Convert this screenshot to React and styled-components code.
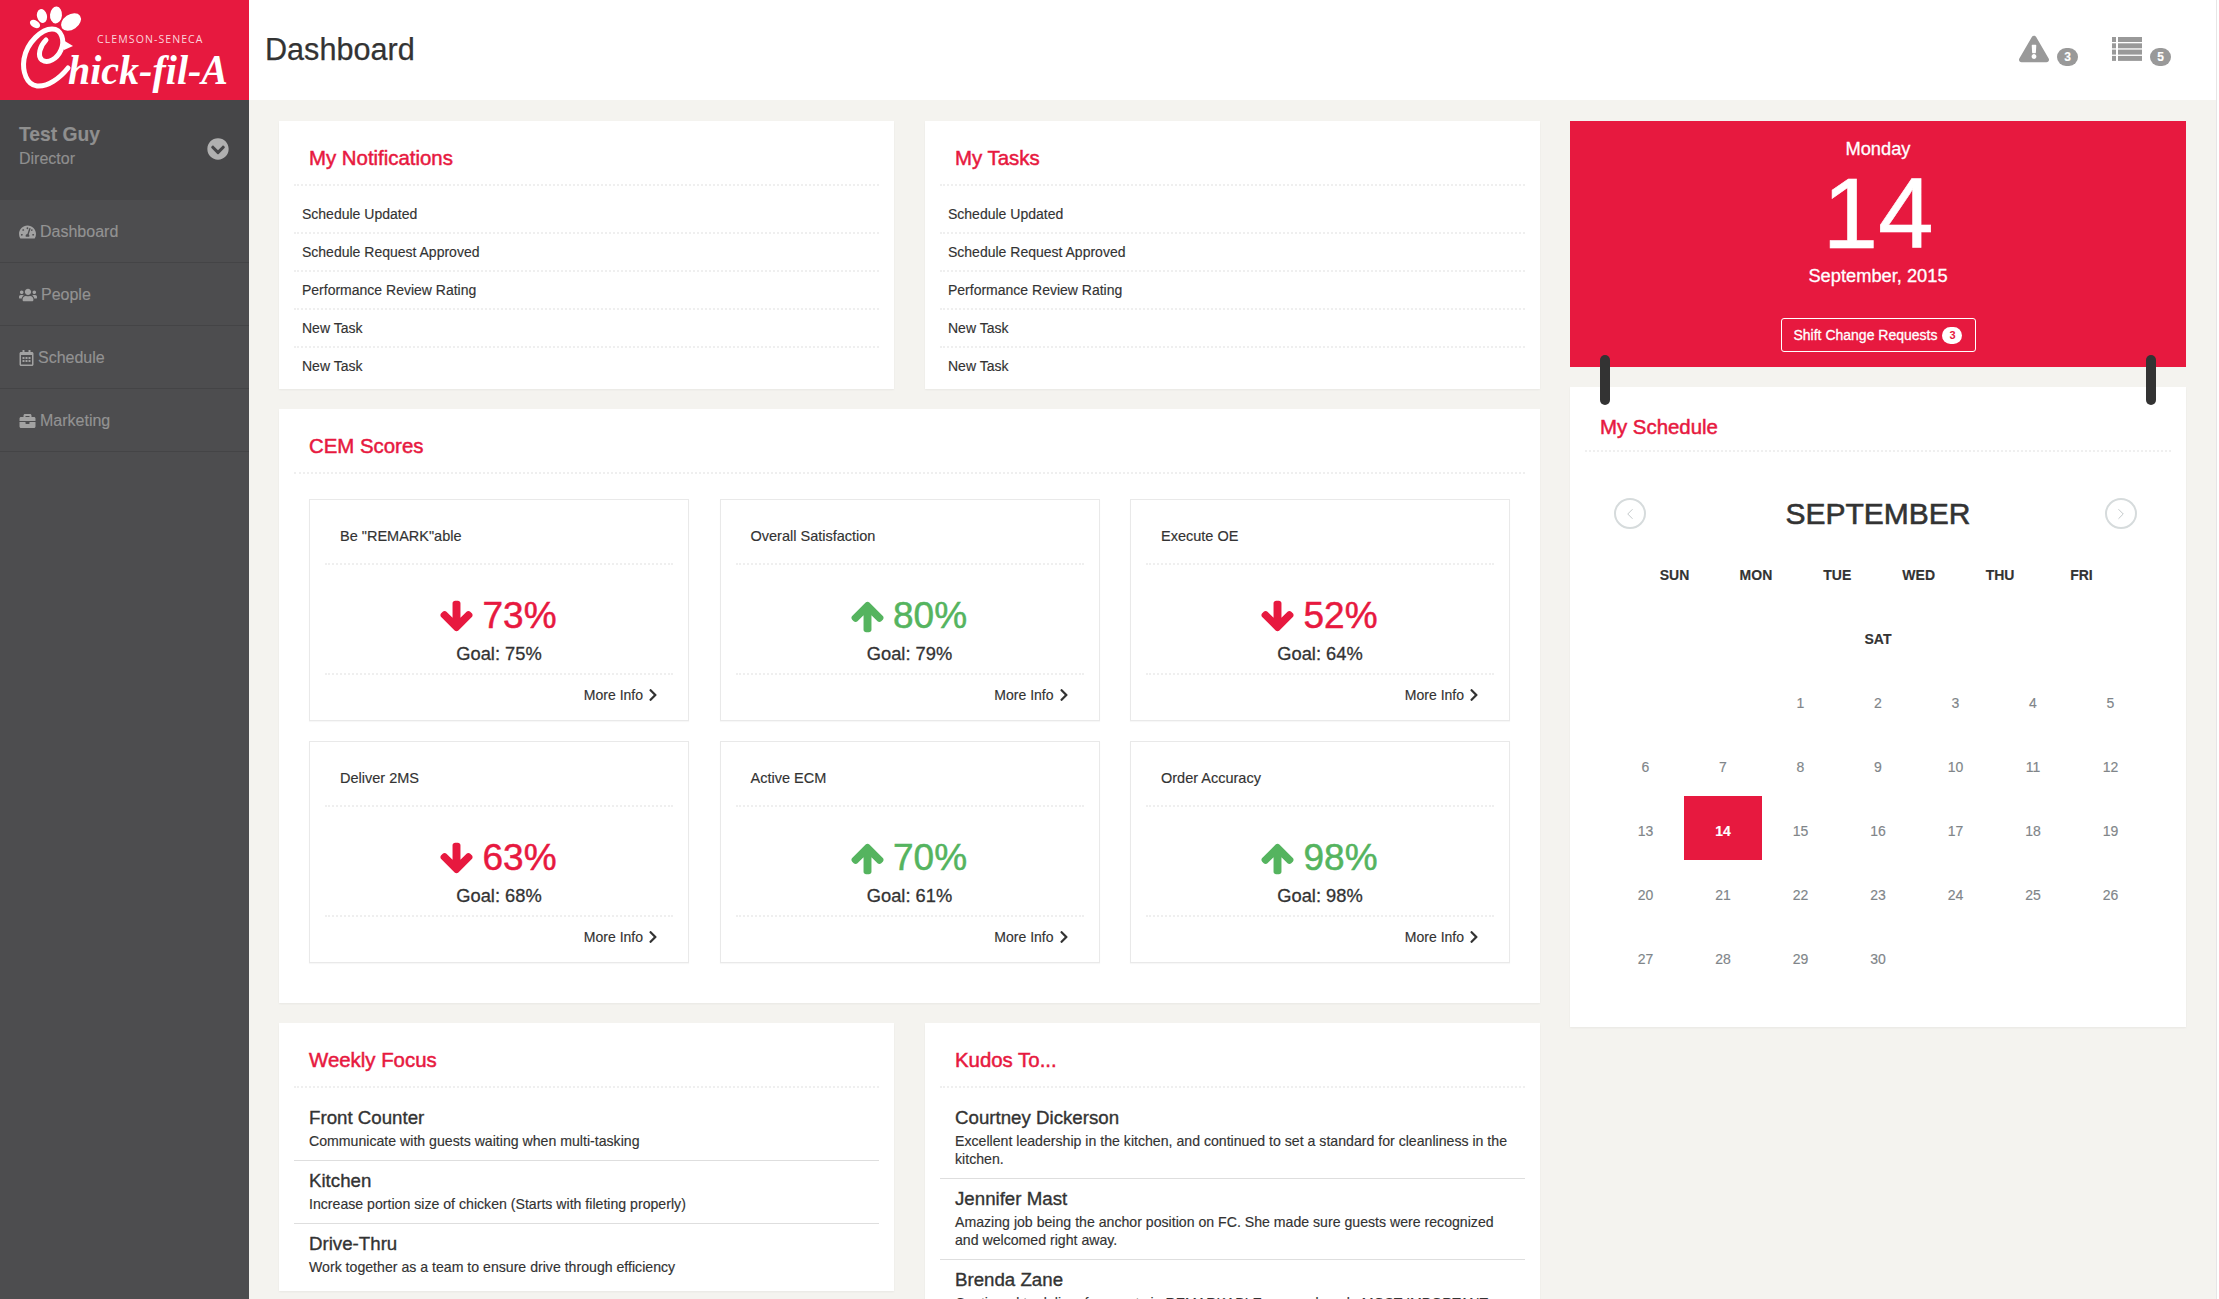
import styled, { createGlobalStyle } from "styled-components";
import {
  FaTachometerAlt,
  FaUsers,
  FaRegCalendarAlt,
  FaBriefcase,
  FaExclamationTriangle,
  FaChevronRight,
  FaChevronCircleDown,
} from "react-icons/fa";
import { ChevronLeft, ChevronRight } from "lucide-react";

const RED = "#e7193f";
const GREEN = "#55b45f";
const DOTS = "2px dotted #efefef";

const GlobalStyle = createGlobalStyle`
  * { box-sizing: border-box; }
  html, body { margin: 0; height: 100%; }
  body {
    font-family: "Liberation Sans", Arial, sans-serif;
    font-size: 14px;
    color: #333;
    background: #f4f3ef;
    -webkit-text-stroke: 0.15px currentColor;
  }
`;

const Page = styled.div`
  display: flex;
  height: 100vh;
  overflow: hidden;
  background: #fff;
`;

const Sidebar = styled.aside`
  flex: 0 0 249px;
  background: #4d4d4f;
`;

const LogoBox = styled.div`
  height: 100px;
  background: ${RED};
`;

const LogoText = styled.text`
  font-family: "Liberation Serif", serif;
  font-style: italic;
  font-weight: 700;
  fill: #fff;
`;

const LogoCaption = styled.text`
  font-family: "Open Sans", sans-serif;
  font-size: 10.5px;
  letter-spacing: 1.1px;
  fill: #fbd5dc;
  -webkit-text-stroke: 0;
`;

const UserBox = styled.div`
  height: 100px;
  background: #464648;
  display: flex;
  justify-content: space-between;
  align-items: center;
  padding: 0 20px 2px 19px;
  color: #8f8f8f;
`;

const UserInfo = styled.div`
  align-self: flex-start;
  padding-top: 23px;
`;

const UserName = styled.div`
  font-size: 19.3px;
  font-weight: 700;
  line-height: 24px;
`;

const UserRole = styled.div`
  font-size: 16px;
  line-height: 24px;
`;

const UserToggle = styled(FaChevronCircleDown)`
  width: 22px;
  height: 22px;
  color: #b0b0b0;
`;

const NavItem = styled.div`
  height: 63px;
  display: flex;
  align-items: center;
  gap: 4px;
  padding: 2px 0 0 19px;
  border-bottom: 1px solid #444446;
  font-size: 16px;
  color: #939393;

  svg {
    width: ${(p) => p.$iconWidth}px;
    height: 16px;
    color: #a2a2a2;
  }
`;

const Main = styled.main`
  flex: 1;
  min-width: 0;
  border-right: 1px solid #e6e6e6;
  margin-right: 2px;
  background: #f4f3ef;
`;

const TopBar = styled.header`
  height: 100px;
  background: #fff;
  display: flex;
  justify-content: space-between;
  padding: 0 45px 0 16px;
`;

const PageTitle = styled.h1`
  margin: 0;
  font-size: 30.6px;
  font-weight: 400;
  line-height: 98px;
  color: #333;
  -webkit-text-stroke: 0.25px #333;
`;

const Alerts = styled.div`
  display: flex;
  align-items: flex-start;
  padding-top: 35px;
`;

const AlertIcon = styled(FaExclamationTriangle)`
  width: 30px;
  height: 28px;
  color: #999;
`;

const ListIcon = styled.svg`
  width: 30px;
  height: 24px;
  margin-top: 2px;
  fill: #999;
`;

const CountBadge = styled.span`
  width: 21px;
  height: 18px;
  margin: 13px ${(p) => p.$gap || 0}px 0 8px;
  border-radius: 9px;
  background: #999;
  color: #fff;
  font-size: 12px;
  font-weight: 700;
  line-height: 18px;
  text-align: center;
`;

const Content = styled.div`
  display: grid;
  grid-template-columns: 1261px 616px;
  justify-content: space-between;
  padding: 21px 30px 0;
`;

const Column = styled.div`
  display: flex;
  flex-direction: column;
  gap: 20px;
`;

const TwoUp = styled.div`
  display: grid;
  grid-template-columns: 615px 615px;
  justify-content: space-between;
  align-items: start;
`;

const Card = styled.section`
  background: #fff;
  box-shadow: 0 1px 2px rgba(0, 0, 0, 0.05);
`;

const CardTitle = styled.h2`
  height: 65px;
  margin: 0 15px;
  padding: ${(p) => (p.$low ? 29 : 26)}px 0 0 15px;
  border-bottom: ${DOTS};
  font-size: 20.4px;
  font-weight: 400;
  line-height: 22px;
  color: ${RED};
  -webkit-text-stroke: 0.5px ${RED};
`;

const SimpleList = styled.ul`
  list-style: none;
  margin: 0;
  padding: 10px 15px 3px;
`;

const SimpleRow = styled.li`
  height: 38px;
  padding-left: 8px;
  line-height: 36px;
  font-size: 14px;

  &:not(:last-child) {
    border-bottom: ${DOTS};
  }
`;

const ScoreGrid = styled.div`
  display: grid;
  grid-template-columns: repeat(3, 380px);
  grid-auto-rows: 222px;
  column-gap: 30.5px;
  row-gap: 20px;
  padding: 25px 0 40px 30px;
`;

const ScoreCard = styled.article`
  border: 1px solid #e9e9e9;
  box-shadow: 0 1px 1px rgba(0, 0, 0, 0.03);
  text-align: center;
`;

const ScoreName = styled.div`
  height: 65px;
  margin: 0 15px;
  padding: 26px 0 0 15px;
  border-bottom: ${DOTS};
  font-size: 14.5px;
  line-height: 20px;
  text-align: left;
`;

const ScoreValue = styled.div`
  display: flex;
  justify-content: center;
  align-items: center;
  gap: 7px;
  height: 44px;
  margin-top: 29px;
  padding-right: 3px;
  font-size: 37px;
  color: ${(p) => (p.$up ? GREEN : RED)};
  -webkit-text-stroke: 0.5px ${(p) => (p.$up ? GREEN : RED)};
`;

const Arrow = styled.svg`
  width: 37px;
  height: 37px;
  fill: currentColor;
  stroke: none;
  transform: ${(p) => (p.$up ? "scaleY(-1)" : "none")};
`;

const ScoreGoal = styled.div`
  margin-top: 4px;
  font-size: 18.3px;
  line-height: 24px;
  -webkit-text-stroke: 0.3px #333;
`;

const ScoreFooter = styled.div`
  display: flex;
  justify-content: flex-end;
  align-items: center;
  gap: 4px;
  height: 42px;
  margin: 7px 15px 0;
  padding-right: 14px;
  border-top: ${DOTS};
  font-size: 14px;

  svg {
    width: 12px;
    height: 14px;
  }
`;

const NoteList = styled.div`
  padding: 10px 0 5px;
`;

const Note = styled.div`
  margin: 0 15px;
  padding: 8px 15px 10px;

  &:not(:last-child) {
    border-bottom: 1px solid #dedede;
  }
`;

const NoteTitle = styled.div`
  font-size: 18.7px;
  line-height: 24px;
  -webkit-text-stroke: 0.35px #333;
`;

const NoteText = styled.div`
  margin-top: 2px;
  font-size: 14.13px;
  line-height: 18px;
`;

const CalendarWrap = styled.div`
  position: relative;
  display: flex;
  flex-direction: column;
  gap: 20px;
`;

const Ring = styled.span`
  position: absolute;
  top: 234px;
  ${(p) => (p.$right ? "right: 30px;" : "left: 30px;")}
  width: 10px;
  height: 50px;
  border-radius: 5px;
  background: #333;
`;

const DateHero = styled.div`
  height: 246px;
  padding-top: 17px;
  background: ${RED};
  color: #fff;
  display: flex;
  flex-direction: column;
  align-items: center;
`;

const HeroLine = styled.div`
  font-size: 18.3px;
  line-height: 22px;
  -webkit-text-stroke: 0.3px #fff;
`;

const HeroDay = styled.div`
  margin: 3px 0 2px;
  font-size: 100px;
  line-height: 100px;
  -webkit-text-stroke: 0.6px #fff;
`;

const ShiftButton = styled.button`
  display: flex;
  align-items: center;
  gap: 5px;
  width: 195px;
  height: 34px;
  margin-top: 31px;
  padding: 0 12px;
  border: 1px solid #fff;
  border-radius: 3px;
  background: transparent;
  color: #fff;
  font: inherit;
  font-size: 14px;
  white-space: nowrap;
  -webkit-text-stroke: 0.3px #fff;
`;

const ShiftCount = styled.span`
  flex: none;
  width: 20px;
  height: 17px;
  border-radius: 9px;
  background: #fff;
  color: ${RED};
  font-size: 11px;
  font-weight: 700;
  line-height: 17px;
  text-align: center;
  -webkit-text-stroke: 0;
`;

const ScheduleCard = styled(Card)`
  height: 640px;
`;

const MonthBar = styled.div`
  display: grid;
  grid-template-columns: 1fr auto 1fr;
  align-items: center;
  margin-top: 46px;
`;

const MonthName = styled.div`
  font-size: 30px;
  line-height: 31px;
  -webkit-text-stroke: 0.6px #333;
`;

const MonthButton = styled.span`
  display: flex;
  align-items: center;
  justify-content: center;
  width: 32px;
  height: 31px;
  border: 2px solid #d6dbdc;
  border-radius: 50%;
  color: #bcc3c4;
  justify-self: ${(p) => (p.$next ? "end" : "start")};
  margin: ${(p) => (p.$next ? "0 49px 0 0" : "0 0 0 44px")};
`;

const Weekdays = styled.div`
  display: flex;
  flex-wrap: wrap;
  justify-content: center;
  width: 500px;
  margin: 14px auto 0;
`;

const Weekday = styled.div`
  width: 81.4px;
  height: 64px;
  font-size: 14px;
  font-weight: 700;
  line-height: 64px;
  text-align: center;
`;

const DayGrid = styled.div`
  display: grid;
  grid-template-columns: repeat(7, 77.5px);
  grid-auto-rows: 64px;
  justify-content: center;
  margin-top: -3px;
`;

const Day = styled.div`
  padding-top: 6px;
  font-size: 14px;
  line-height: 58px;
  text-align: center;
  color: ${(p) => (p.$today ? "#fff" : "#808589")};
  background: ${(p) => (p.$today ? RED : "transparent")};
  font-weight: ${(p) => (p.$today ? 700 : 400)};
`;

const notifications = [
  "Schedule Updated",
  "Schedule Request Approved",
  "Performance Review Rating",
  "New Task",
  "New Task",
];

const scores = [
  { name: 'Be "REMARK"able', value: 73, goal: 75 },
  { name: "Overall Satisfaction", value: 80, goal: 79, up: true },
  { name: "Execute OE", value: 52, goal: 64 },
  { name: "Deliver 2MS", value: 63, goal: 68 },
  { name: "Active ECM", value: 70, goal: 61, up: true },
  { name: "Order Accuracy", value: 98, goal: 98, up: true },
];

const focus = [
  ["Front Counter", "Communicate with guests waiting when multi-tasking"],
  ["Kitchen", "Increase portion size of chicken (Starts with fileting properly)"],
  ["Drive-Thru", "Work together as a team to ensure drive through efficiency"],
];

const kudos = [
  [
    "Courtney Dickerson",
    "Excellent leadership in the kitchen, and continued to set a standard for cleanliness in the kitchen.",
  ],
  [
    "Jennifer Mast",
    "Amazing job being the anchor position on FC. She made sure guests were recognized and welcomed right away.",
  ],
  [
    "Brenda Zane",
    "Continued to deliver for guests in REMARKABLE way and made MOST IMPORTANT",
  ],
];

const weekdays = ["SUN", "MON", "TUE", "WED", "THU", "FRI", "SAT"];
const days = [null, null, ...Array.from({ length: 30 }, (_, i) => i + 1)];

function Logo() {
  return (
    <svg width="249" height="100" viewBox="0 0 249 100">
      <g fill="#fff">
        <ellipse cx="35" cy="24" rx="5.5" ry="3.6" transform="rotate(30 35 24)" />
        <ellipse cx="42" cy="16" rx="5" ry="7" transform="rotate(-15 42 16)" />
        <ellipse cx="56" cy="15" rx="6" ry="8.5" transform="rotate(5 56 15)" />
        <ellipse cx="71" cy="22" rx="11" ry="7.5" transform="rotate(-35 71 22)" />
        <path d="M63 40 L73 46 L64 50 Z" />
      </g>
      <path
        d="M68 68 C60 78 48 87 37 86 C27 85 22 72 24 59 C27 42 42 29 52 29 C62 29 65 41 61 50 C57 59 48 64 42 60 C37 56 40 46 46 40"
        fill="none"
        stroke="#fff"
        strokeWidth="5"
        strokeLinecap="round"
      />
      <circle cx="52" cy="39" r="2" fill={RED} />
      <LogoCaption x="97" y="43">
        CLEMSON-SENECA
      </LogoCaption>
      <LogoText x="68" y="84" fontSize="42" textLength="160" lengthAdjust="spacingAndGlyphs">
        hick-fil-A
      </LogoText>
    </svg>
  );
}

function ScoreArrow({ up }) {
  return (
    <Arrow $up={up} viewBox="0 0 1792 1792">
      <path d="M1675 832q0 53-37 90l-651 652q-39 37-91 37-53 0-90-37l-651-652q-38-36-38-90 0-53 38-91l74-75q39-37 91-37 53 0 90 37l294 294v-704q0-52 38-90t90-38h128q52 0 90 38t38 90v704l294-294q37-37 90-37 52 0 91 37l75 75q37 39 37 91z" />
    </Arrow>
  );
}

function Score({ name, value, goal, up }) {
  return (
    <ScoreCard>
      <ScoreName>{name}</ScoreName>
      <ScoreValue $up={up}>
        <ScoreArrow up={up} />
        {value}%
      </ScoreValue>
      <ScoreGoal>Goal: {goal}%</ScoreGoal>
      <ScoreFooter>
        More Info <FaChevronRight />
      </ScoreFooter>
    </ScoreCard>
  );
}

function Notes({ items }) {
  return (
    <NoteList>
      {items.map(([title, text]) => (
        <Note key={title}>
          <NoteTitle>{title}</NoteTitle>
          <NoteText>{text}</NoteText>
        </Note>
      ))}
    </NoteList>
  );
}

export default function App() {
  return (
    <>
      <GlobalStyle />
      <Page>
        <Sidebar>
          <LogoBox>
            <Logo />
          </LogoBox>
          <UserBox>
            <UserInfo>
              <UserName>Test Guy</UserName>
              <UserRole>Director</UserRole>
            </UserInfo>
            <UserToggle />
          </UserBox>
          <nav>
            <NavItem $iconWidth={17}>
              <FaTachometerAlt /> Dashboard
            </NavItem>
            <NavItem $iconWidth={18}>
              <FaUsers /> People
            </NavItem>
            <NavItem $iconWidth={15}>
              <FaRegCalendarAlt /> Schedule
            </NavItem>
            <NavItem $iconWidth={17}>
              <FaBriefcase /> Marketing
            </NavItem>
          </nav>
        </Sidebar>

        <Main>
          <TopBar>
            <PageTitle>Dashboard</PageTitle>
            <Alerts>
              <AlertIcon />
              <CountBadge $gap={34}>3</CountBadge>
              <ListIcon viewBox="0 0 30 24">
                {[0, 6.3, 12.6, 18.9].map((y) => (
                  <g key={y}>
                    <rect x="0" y={y} width="4" height="5" />
                    <rect x="6" y={y} width="24" height="5" />
                  </g>
                ))}
              </ListIcon>
              <CountBadge>5</CountBadge>
            </Alerts>
          </TopBar>

          <Content>
            <Column>
              <TwoUp>
                <Card>
                  <CardTitle>My Notifications</CardTitle>
                  <SimpleList>
                    {notifications.map((item, i) => (
                      <SimpleRow key={i}>{item}</SimpleRow>
                    ))}
                  </SimpleList>
                </Card>
                <Card>
                  <CardTitle>My Tasks</CardTitle>
                  <SimpleList>
                    {notifications.map((item, i) => (
                      <SimpleRow key={i}>{item}</SimpleRow>
                    ))}
                  </SimpleList>
                </Card>
              </TwoUp>

              <Card>
                <CardTitle>CEM Scores</CardTitle>
                <ScoreGrid>
                  {scores.map((score) => (
                    <Score key={score.name} {...score} />
                  ))}
                </ScoreGrid>
              </Card>

              <TwoUp>
                <Card>
                  <CardTitle>Weekly Focus</CardTitle>
                  <Notes items={focus} />
                </Card>
                <Card>
                  <CardTitle>Kudos To...</CardTitle>
                  <Notes items={kudos} />
                </Card>
              </TwoUp>
            </Column>

            <CalendarWrap>
              <DateHero>
                <HeroLine>Monday</HeroLine>
                <HeroDay>14</HeroDay>
                <HeroLine>September, 2015</HeroLine>
                <ShiftButton>
                  Shift Change Requests <ShiftCount>3</ShiftCount>
                </ShiftButton>
              </DateHero>
              <Ring />
              <Ring $right />
              <ScheduleCard>
                <CardTitle $low>My Schedule</CardTitle>
                <MonthBar>
                  <MonthButton>
                    <ChevronLeft size={18} strokeWidth={1.2} />
                  </MonthButton>
                  <MonthName>SEPTEMBER</MonthName>
                  <MonthButton $next>
                    <ChevronRight size={18} strokeWidth={1.2} />
                  </MonthButton>
                </MonthBar>
                <Weekdays>
                  {weekdays.map((d) => (
                    <Weekday key={d}>{d}</Weekday>
                  ))}
                </Weekdays>
                <DayGrid>
                  {days.map((d, i) => (
                    <Day key={i} $today={d === 14}>
                      {d}
                    </Day>
                  ))}
                </DayGrid>
              </ScheduleCard>
            </CalendarWrap>
          </Content>
        </Main>
      </Page>
    </>
  );
}
